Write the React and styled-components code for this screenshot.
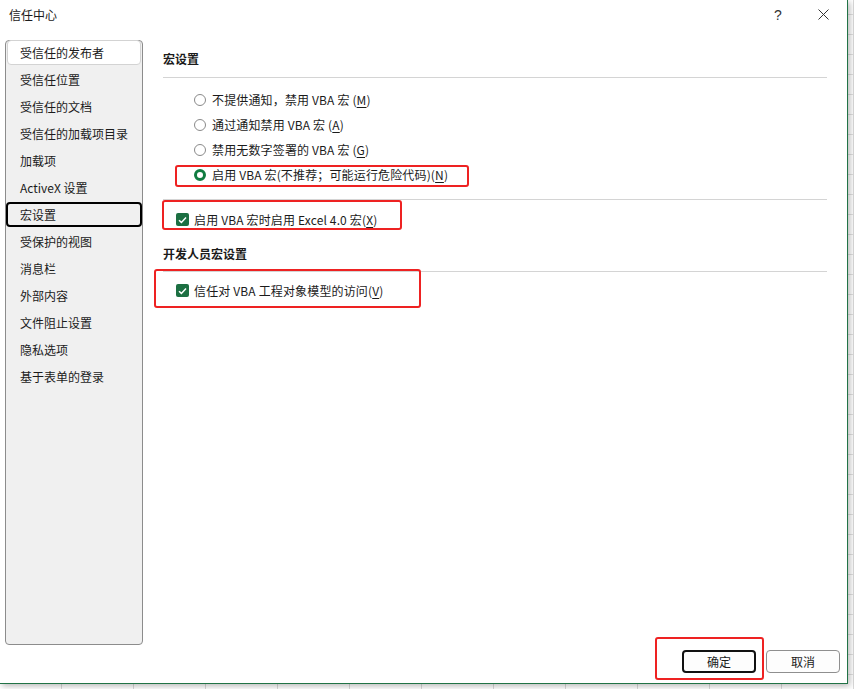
import React from "react";
import styled, { createGlobalStyle, css } from "styled-components";

const GlobalStyle = createGlobalStyle`
  html, body {
    margin: 0;
    padding: 0;
  }
  body {
    width: 854px;
    height: 689px;
    overflow: hidden;
    font-family: "Noto Sans CJK SC", "Noto Sans", sans-serif;
    font-size: 12px;
    color: #1b1b1b;
    background-color: #ffffff;
    background-image:
      repeating-linear-gradient(90deg, transparent 0 61px, #d9d9d9 61px 62px, transparent 62px 72px),
      repeating-linear-gradient(0deg, transparent 0 19px, #e1e1e1 19px 20px);
    background-position: 0 0, 0 5px;
  }
`;

const Dialog = styled.div`
  width: 847px;
  height: 683px;
  background: #ffffff;
  border-right: 1px solid #217346;
  border-bottom: 1px solid #217346;
  box-shadow: 2px 2px 6px rgba(0, 0, 0, 0.28);
  display: flex;
  flex-direction: column;
`;

const TitleBar = styled.div`
  height: 32px;
  display: flex;
  align-items: center;
  padding-left: 9px;
  box-sizing: border-box;
`;

const TitleText = styled.div`
  flex: 1;
  font-size: 12px;
  line-height: 16px;
  margin-top: -2px;
`;

const TitleButton = styled.div`
  width: 20px;
  height: 20px;
  display: flex;
  align-items: center;
  justify-content: center;
  margin-right: ${(p) => p.$mr}px;
  margin-top: -3px;
  font-family: "Liberation Sans", sans-serif;
  font-size: 14px;
  color: #333;
`;

const Main = styled.div`
  flex: 1;
  display: flex;
  padding-top: 8px;
  min-height: 0;
`;

const Sidebar = styled.div`
  width: 138px;
  margin-left: 5px;
  box-sizing: border-box;
  border: 1px solid #8c8c8c;
  border-radius: 4px;
  background: #f0f0f0;
  display: flex;
  flex-direction: column;
  gap: 2px;
`;

const NavItem = styled.div`
  height: 25px;
  display: flex;
  align-items: center;
  padding-left: 12px;
  box-sizing: border-box;
  border: 1px solid transparent;
  border-radius: 4px;
  margin: 0 1px;
  line-height: 16px;
  ${(p) =>
    p.$hover &&
    css`
      background: #ffffff;
      border-color: #d3d3d3;
      margin-top: -1px;
    `}
  ${(p) =>
    p.$selected &&
    css`
      border: 2px solid #000000;
      margin: 0;
      padding-left: 12px;
      background: #f0f0f0;
    `}
`;

const Content = styled.div`
  width: 664px;
  margin-left: 20px;
  display: flex;
  flex-direction: column;
`;

const Heading = styled.div`
  font-weight: 700;
  line-height: 18px;
  height: 18px;
  margin-top: ${(p) => p.$mt}px;
`;

const Divider = styled.div`
  height: 1px;
  background: #d4d4d4;
  margin-top: ${(p) => p.$mt}px;
`;

const Row = styled.div`
  position: relative;
  height: 25px;
  display: flex;
  align-items: center;
  gap: ${(p) => p.$gap}px;
  padding-left: ${(p) => p.$indent}px;
  margin-top: ${(p) => p.$mt || 0}px;
  line-height: 16px;
  letter-spacing: 0.15px;
`;

const Radio = styled.span`
  width: 12px;
  height: 12px;
  box-sizing: border-box;
  border-radius: 50%;
  border: ${(p) => (p.$on ? "3px solid #107c41" : "1px solid #8a8a8a")};
  background: #fff;
  flex: none;
`;

const Check = styled.span`
  width: 13px;
  height: 13px;
  border-radius: 2px;
  background: #1c6f42;
  display: flex;
  align-items: center;
  justify-content: center;
  flex: none;
`;

const Key = styled.span`
  text-decoration: underline;
  text-underline-offset: 2px;
`;

const Mark = styled.div`
  position: absolute;
  left: ${(p) => p.$l}px;
  top: ${(p) => p.$t}px;
  width: ${(p) => p.$w}px;
  height: ${(p) => p.$h}px;
  box-sizing: border-box;
  border: 2px solid #ee2222;
  border-radius: 3px;
  pointer-events: none;
`;

const Footer = styled.div`
  height: 38px;
  display: flex;
  justify-content: flex-end;
  align-items: flex-start;
  gap: 10px;
  padding: 5px 7px 0 0;
  box-sizing: border-box;
`;

const ButtonWrap = styled.div`
  position: relative;
`;

const Button = styled.button`
  width: 74px;
  height: 23px;
  box-sizing: border-box;
  border-radius: 4px;
  background: #fdfdfd;
  font-family: "Noto Sans CJK SC", sans-serif;
  font-size: 12px;
  color: #1b1b1b;
  padding: 0;
  border: ${(p) => (p.$primary ? "2px solid #111" : "1px solid #8f8f8f")};
`;

const CheckMark = () => (
  <svg width="9" height="8" viewBox="0 0 9 8">
    <path d="M1 4.2 L3.4 6.4 L8 1.6" fill="none" stroke="#fff" strokeWidth="1.5" />
  </svg>
);

const CloseIcon = () => (
  <svg width="11" height="11" viewBox="0 0 11 11">
    <path d="M0.5 0.5 L10.5 10.5 M10.5 0.5 L0.5 10.5" stroke="#333" strokeWidth="1" />
  </svg>
);

const navItems = [
  "受信任的发布者",
  "受信任位置",
  "受信任的文档",
  "受信任的加载项目录",
  "加载项",
  "ActiveX 设置",
  "宏设置",
  "受保护的视图",
  "消息栏",
  "外部内容",
  "文件阻止设置",
  "隐私选项",
  "基于表单的登录",
];

const radios = [
  { text: "不提供通知，禁用 VBA 宏 (", key: "M", tail: ")" },
  { text: "通过通知禁用 VBA 宏 (", key: "A", tail: ")" },
  { text: "禁用无数字签署的 VBA 宏 (", key: "G", tail: ")" },
  { text: "启用 VBA 宏(不推荐；可能运行危险代码)(", key: "N", tail: ")", on: true },
];

export default function App() {
  return (
    <>
      <GlobalStyle />
      <Dialog>
        <TitleBar>
          <TitleText>信任中心</TitleText>
          <TitleButton $mr={25}>?</TitleButton>
          <TitleButton $mr={14}>
            <CloseIcon />
          </TitleButton>
        </TitleBar>
        <Main>
          <Sidebar>
            {navItems.map((n, i) => (
              <NavItem key={n} $hover={i === 0} $selected={n === "宏设置"}>
                {n}
              </NavItem>
            ))}
          </Sidebar>
          <Content>
            <Heading $mt={10}>宏设置</Heading>
            <Divider $mt={9} />
            {radios.map((r, i) => (
              <Row key={r.key} $indent={31} $gap={6} $mt={i === 0 ? 9 : 0}>
                <Radio $on={r.on} />
                <span>
                  {r.text}
                  <Key>{r.key}</Key>
                  {r.tail}
                </span>
                {r.on && <Mark $l={12} $t={3} $w={294} $h={22} />}
              </Row>
            ))}
            <Divider $mt={12} />
            <Row $indent={13} $gap={5} $mt={7}>
              <Check>
                <CheckMark />
              </Check>
              <span>
                启用 VBA 宏时启用 Excel 4.0 宏(<Key>X</Key>)
              </span>
              <Mark $l={-1} $t={-7} $w={240} $h={30} />
            </Row>
            <Heading $mt={13}>开发人员宏设置</Heading>
            <Divider $mt={8} />
            <Row $indent={13} $gap={5} $mt={6}>
              <Check>
                <CheckMark />
              </Check>
              <span>
                信任对 VBA 工程对象模型的访问(<Key>V</Key>)
              </span>
              <Mark $l={-9} $t={-9} $w={267} $h={39} />
            </Row>
          </Content>
        </Main>
        <Footer>
          <ButtonWrap>
            <Button $primary>确定</Button>
            <Mark $l={-27} $t={-13} $w={109} $h={43} />
          </ButtonWrap>
          <Button>取消</Button>
        </Footer>
      </Dialog>
    </>
  );
}
